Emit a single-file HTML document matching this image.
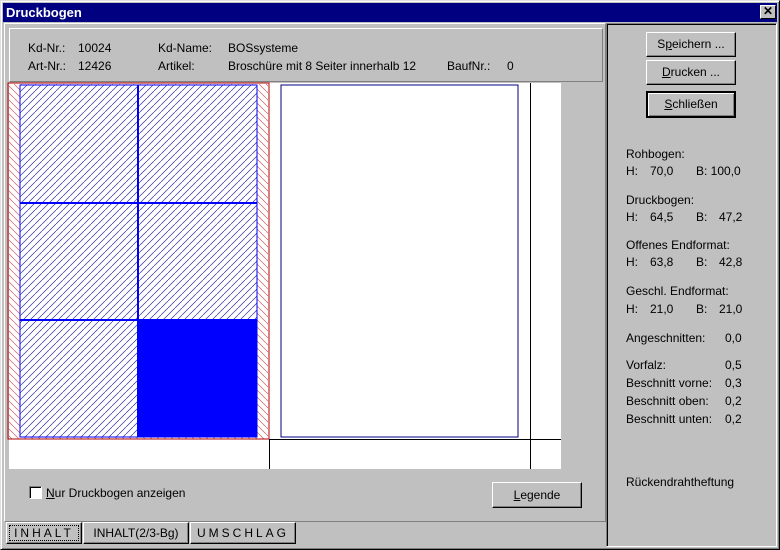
<!DOCTYPE html>
<html><head><style>
*{margin:0;padding:0;box-sizing:border-box}
body{width:780px;height:550px;background:#c0c0c0;font-family:"Liberation Sans",sans-serif;font-size:12px;color:#000;position:relative;overflow:hidden}
.a{position:absolute;white-space:nowrap;line-height:14px}
.btn{position:absolute;background:#c0c0c0;border:1px solid;border-color:#fff #000 #000 #fff;box-shadow:inset -1px -1px 0 #808080;text-align:center;line-height:22px}
.tab{position:absolute;top:522px;height:22px;border:1px solid;border-color:#fff #000 #000 #fff;box-shadow:inset -1px -1px 0 #808080;line-height:20px;text-align:center}
</style></head><body>
<div class="a" style="left:0;top:0;width:780px;height:550px;border:1px solid;border-color:#dfdfdf #000 #000 #dfdfdf;box-shadow:inset 1px 1px 0 #fff,inset -1px -1px 0 #808080"></div>
<div class="a" style="left:3px;top:3px;width:774px;height:19px;background:#000080"></div>
<div class="a" style="left:6px;top:6px;color:#fff;font-weight:bold;font-size:13px">Druckbogen</div>
<div class="a" style="left:760px;top:5px;width:16px;height:14px;background:#c0c0c0;border:1px solid;border-color:#fff #000 #000 #fff;font-size:12px;line-height:11px;text-align:center;font-weight:bold">✕</div>
<div class="a" style="left:4px;top:23px;width:602px;height:499px;border:1px solid;border-color:#fff #808080 #808080 #fff"></div>
<div class="a" style="left:9px;top:28px;width:594px;height:54px;border:1px solid;border-color:#fff #808080 #808080 #fff"></div>
<div class="a" style="left:28px;top:41px">Kd-Nr.:</div><div class="a" style="left:78px;top:41px">10024</div>
<div class="a" style="left:158px;top:41px">Kd-Name:</div><div class="a" style="left:228px;top:41px">BOSsysteme</div>
<div class="a" style="left:28px;top:59px">Art-Nr.:</div><div class="a" style="left:78px;top:59px">12426</div>
<div class="a" style="left:158px;top:59px">Artikel:</div><div class="a" style="left:228px;top:59px">Broschüre mit 8 Seiter innerhalb 12</div>
<div class="a" style="left:447px;top:59px">BaufNr.:</div><div class="a" style="left:507px;top:59px">0</div>
<svg class="a" style="left:0;top:0" width="780" height="550">
<defs>
<pattern id="bh" width="7" height="7" patternUnits="userSpaceOnUse"><rect width="7" height="7" fill="#fff"/><path d="M-1,8 L8,-1" stroke="#3030a0" stroke-width="0.7"/></pattern>
<pattern id="rh" width="7" height="7" patternUnits="userSpaceOnUse"><rect width="7" height="7" fill="#fff"/><path d="M-1,-1 L8,8" stroke="#d06060" stroke-width="0.7"/></pattern>
</defs>
<rect x="9" y="83" width="552" height="386" fill="#fff"/>
<rect x="9" y="84" width="259" height="355" fill="url(#rh)"/>
<rect x="20" y="85" width="237" height="352" fill="url(#bh)"/>
<rect x="138" y="320" width="119" height="117" fill="#0000ff"/>
<g shape-rendering="crispEdges">
<rect x="20" y="85" width="237" height="352" fill="none" stroke="#0000ff" stroke-width="1"/>
<rect x="137" y="85" width="2" height="352" fill="#0000ff"/>
<rect x="20" y="202" width="237" height="2" fill="#0000ff"/>
<rect x="20" y="319" width="237" height="2" fill="#0000ff"/>
<rect x="8" y="83" width="261" height="356" fill="none" stroke="#b00000" stroke-width="1"/>
<rect x="269" y="439" width="1" height="30" fill="#000"/>
<rect x="269" y="439" width="292" height="1" fill="#000"/>
<rect x="530" y="83" width="1" height="386" fill="#000"/>
<rect x="281" y="85" width="237" height="352" fill="#fff" stroke="#000080"/>
</g>
</svg>
<div class="a" style="left:29px;top:486px;width:13px;height:13px;background:#fff;border:1px solid;border-color:#808080 #fff #fff #808080;box-shadow:inset 1px 1px 0 #000"></div>
<div class="a" style="left:46px;top:486px"><u>N</u>ur Druckbogen anzeigen</div>
<div class="btn" style="left:492px;top:482px;width:90px;height:26px;line-height:24px"><u>L</u>egende</div>
<div class="tab" style="left:6px;width:76px;letter-spacing:3px;outline:1px dotted #000;outline-offset:-4px">INHALT</div>
<div class="tab" style="left:83px;width:106px">INHALT(2/3-Bg)</div>
<div class="tab" style="left:190px;width:106px;letter-spacing:3px">UMSCHLAG</div>
<div class="a" style="left:606px;top:23px;width:171px;height:524px;border:1px solid;border-color:#808080 #fff #fff #808080;box-shadow:inset 1px 1px 0 #000"></div>
<div class="btn" style="left:646px;top:32px;width:90px;height:25px">S<u>p</u>eichern ...</div>
<div class="btn" style="left:646px;top:60px;width:90px;height:25px"><u>D</u>rucken ...</div>
<div class="btn" style="left:646px;top:91px;width:90px;height:27px;border:2px solid #000;line-height:22px;box-shadow:inset 1px 1px 0 #fff,inset -1px -1px 0 #808080"><u>S</u>chließen</div>
<div class="a" style="left:626px;top:147px">Rohbogen:</div>
<div class="a" style="left:626px;top:164px">H:</div><div class="a" style="left:650px;top:164px">70,0</div><div class="a" style="left:696px;top:164px">B: 100,0</div>
<div class="a" style="left:626px;top:193px">Druckbogen:</div>
<div class="a" style="left:626px;top:210px">H:</div><div class="a" style="left:650px;top:210px">64,5</div><div class="a" style="left:696px;top:210px">B:</div><div class="a" style="left:719px;top:210px">47,2</div>
<div class="a" style="left:626px;top:238px">Offenes Endformat:</div>
<div class="a" style="left:626px;top:255px">H:</div><div class="a" style="left:650px;top:255px">63,8</div><div class="a" style="left:696px;top:255px">B:</div><div class="a" style="left:719px;top:255px">42,8</div>
<div class="a" style="left:626px;top:284px">Geschl. Endformat:</div>
<div class="a" style="left:626px;top:302px">H:</div><div class="a" style="left:650px;top:302px">21,0</div><div class="a" style="left:696px;top:302px">B:</div><div class="a" style="left:719px;top:302px">21,0</div>
<div class="a" style="left:626px;top:331px">Angeschnitten:</div><div class="a" style="left:725px;top:331px">0,0</div>
<div class="a" style="left:626px;top:358px">Vorfalz:</div><div class="a" style="left:725px;top:358px">0,5</div>
<div class="a" style="left:626px;top:376px">Beschnitt vorne:</div><div class="a" style="left:725px;top:376px">0,3</div>
<div class="a" style="left:626px;top:394px">Beschnitt oben:</div><div class="a" style="left:725px;top:394px">0,2</div>
<div class="a" style="left:626px;top:412px">Beschnitt unten:</div><div class="a" style="left:725px;top:412px">0,2</div>
<div class="a" style="left:626px;top:475px">Rückendrahtheftung</div>
</body></html>
